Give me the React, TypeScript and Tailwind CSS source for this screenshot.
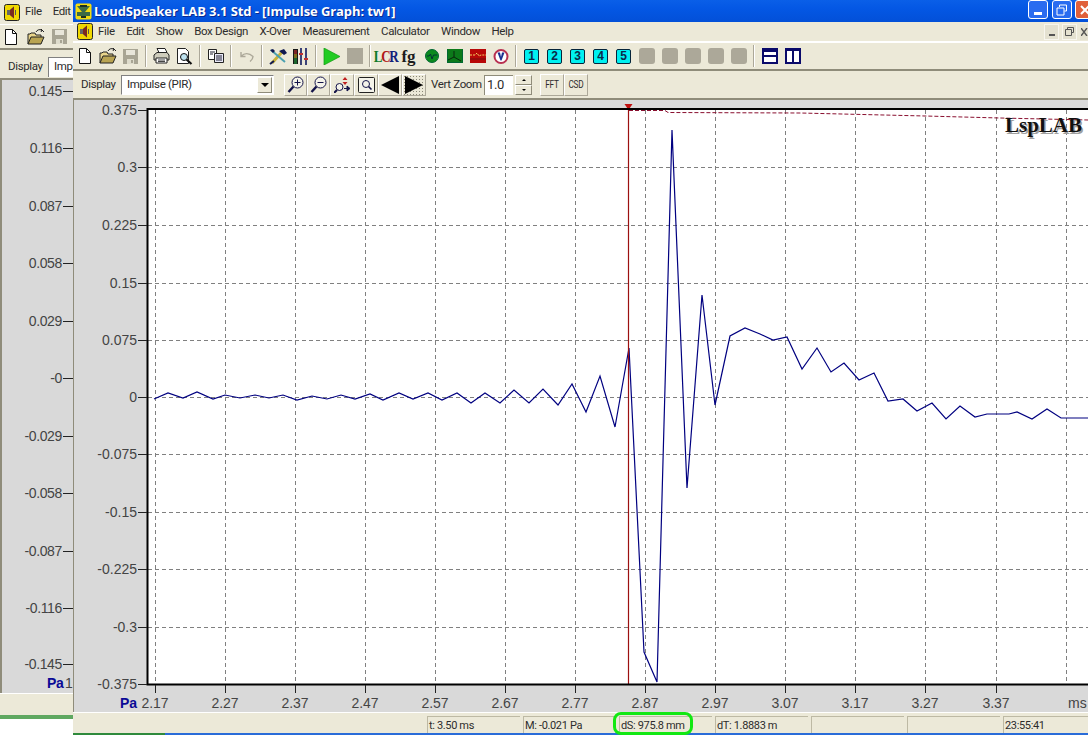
import React from "react";

const curve =
  "154,399 168,393 183,398 197,392 213,399 225,395 240,398 255,395 269,398 283,395 297,400 312,396 327,399 341,395 355,399 370,394 383,400 399,393 413,399 428,393 442,400 457,393 471,403 485,393 500,403 514,390 529,403 543,389 558,405 572,384 586,412 600,376 615,427 629,348 644,652 657,682 672,130 687,488 702,295 715,405 730,336 745,328 760,334 773,340 787,337 802,369 817,348 831,372 844,363 859,380 874,373 888,401 903,399 917,411 932,403 946,419 960,406 975,417 987,414 1009,414 1017,412 1032,419 1047,409 1061,418 1088,418";

const yTicks: [string, number][] = [
  ["0.375", 110], ["0.3", 167], ["0.225", 225], ["0.15", 283], ["0.075", 340], ["0", 397],
  ["-0.075", 454], ["-0.15", 512], ["-0.225", 569], ["-0.3", 627], ["-0.375", 684],
];
const xTicks: [string, number][] = [
  ["2.17", 155], ["2.27", 225], ["2.37", 295], ["2.47", 365], ["2.57", 435], ["2.67", 505], ["2.77", 575],
  ["2.87", 645], ["2.97", 715], ["3.07", 785], ["3.17", 855], ["3.27", 925], ["3.37", 996],
];
const leftTicks: [string, number][] = [
  ["0.145", 91], ["0.116", 148], ["0.087", 206], ["0.058", 263], ["0.029", 321], ["-0", 378],
  ["-0.029", 436], ["-0.058", 493], ["-0.087", 551], ["-0.116", 608], ["-0.145", 664],
];

function SpeakerLogo() {
  return (
    <svg width="16" height="17" viewBox="0 0 16 17">
      <rect x="0.5" y="0.5" width="15" height="16" rx="2" fill="#f0d800" stroke="#222" />
      <path d="M3 6h3l4-3.500v12L6 11H3z" fill="#666" />
      <path d="M6 6l4-3.500v12L6 11z" fill="#7a2a20" />
      <path d="M11.500 6v5" stroke="#555" />
    </svg>
  );
}
function TitleLogo() {
  return (
    <svg width="17" height="17" viewBox="0 0 17 17">
      <rect x="0.5" y="0.5" width="16" height="16" rx="2" fill="#f2dc10" />
      <path d="M2 3h13L10 9h5v4H2v-4h5z" fill="#3d6b45" />
      <path d="M5 2h7v2H5zM6 13h5v2H6z" fill="#1d3020" />
    </svg>
  );
}
function NewIc() {
  return (
    <svg width="14" height="16" viewBox="0 0 14 16">
      <path d="M1.5 .5h7l4 4v11h-11z" fill="#fff" stroke="#111" />
      <path d="M8.5 .5v4h4" fill="none" stroke="#111" />
    </svg>
  );
}
function OpenIc() {
  return (
    <svg width="18" height="16" viewBox="0 0 18 16">
      <path d="M1 15V5h2l1-1h4l1 2h5v2" fill="#e8d48a" stroke="#222" />
      <path d="M1 15l3-7h13l-3 7z" fill="#b9a452" stroke="#222" />
      <path d="M9 3c1-2 3-3 6-2m0 0l-1-1m1 1l-1 2M15 1l2 2" fill="none" stroke="#222" />
    </svg>
  );
}
function SaveIc({ c = "#a8a594" }: { c?: string }) {
  return (
    <svg width="15" height="15" viewBox="0 0 15 15">
      <path d="M0 0h15v15H0z" fill={c} />
      <path d="M3 1h9v5H3z" fill="#e8e6da" />
      <path d="M4 10h7v5H4z" fill="#dedccc" />
      <path d="M8 11h2v3H8z" fill={c} />
    </svg>
  );
}
function PrintIc() {
  return (
    <svg width="17" height="16" viewBox="0 0 17 16">
      <path d="M4 .5h8l2 4H6z" fill="#fff" stroke="#222" />
      <path d="M1 7l3-2.500h10l2 2.500v5H1z" fill="#cfcdbd" stroke="#222" />
      <path d="M3 10h11v5H3z" fill="#fff" stroke="#222" />
      <path d="M5 12h7M5 13.500h7" stroke="#444" />
    </svg>
  );
}
function PreviewIc() {
  return (
    <svg width="17" height="17" viewBox="0 0 17 17">
      <path d="M1.500 .5h8l3 3v12h-11z" fill="#fff" stroke="#222" />
      <circle cx="8" cy="9" r="3.500" fill="#bfe3f0" stroke="#111" />
      <path d="M10.500 11.500L15.500 16" stroke="#111" strokeWidth="2.200" />
    </svg>
  );
}
function CopyIc() {
  return (
    <svg width="16" height="14" viewBox="0 0 16 14">
      <path d="M.5.5h8v10h-8z" fill="#fff" stroke="#222" />
      <path d="M6.500 4.500h9v9h-9z" fill="#e8e8f8" stroke="#222" />
      <path d="M2 3h5M2 5h3M8 7h6M8 9h6M8 11h6" stroke="#223" />
    </svg>
  );
}
function UndoIc() {
  return (
    <svg width="14" height="11" viewBox="0 0 14 11">
      <path d="M1 1v4.500h4.500M1.500 5C4 2 9 1.500 13 5.500c0 2 -1 3.500 -3 5" fill="none" stroke="#aca899" strokeWidth="1.400" />
    </svg>
  );
}
function ToolsIc() {
  return (
    <svg width="18" height="17" viewBox="0 0 18 17">
      <path d="M3 15L14 3" stroke="#c8b23a" strokeWidth="3" />
      <path d="M2 2l14 12" stroke="#4aa0b0" strokeWidth="2" />
      <path d="M10 3l5-2 3 4-3 2z" fill="#101850" />
      <path d="M1 2l3-1 2 2-2 2z" fill="#101850" />
      <path d="M1 16l4-3" stroke="#101850" strokeWidth="2" />
    </svg>
  );
}
function SlidersIc() {
  return (
    <svg width="16" height="17" viewBox="0 0 16 17">
      <path d="M0 1h5v15H0z" fill="#181818" />
      <path d="M1 3h3M1 5h3" stroke="#e03030" />
      <path d="M1 7h3M1 9h3" stroke="#e0c020" />
      <path d="M1 11h3M1 13h3M1 15h3" stroke="#20b040" />
      <path d="M8 0v17M13 0v17" stroke="#111a60" strokeWidth="1.600" />
      <path d="M6 5h4v2H6zM11 10h4v2h-4z" fill="#c03030" />
    </svg>
  );
}
function PlayIc() {
  return (
    <svg width="17" height="17" viewBox="0 0 17 17">
      <path d="M1 0l16 8.500L1 17z" fill="#22cc22" stroke="#119911" strokeWidth="0.700" />
    </svg>
  );
}
function StopIc() {
  return <span className="block h-[16px] w-[16px] bg-[#aca899]" />;
}
function CircleGreen() {
  return (
    <svg width="14" height="14" viewBox="0 0 14 14">
      <circle cx="7" cy="7" r="6.500" fill="#0a8a1e" stroke="#063" />
      <path d="M2 7h2l1.500-2 1.500 5 1.500-4H12" fill="none" stroke="#033" />
    </svg>
  );
}
function GreenGraph() {
  return (
    <svg width="16" height="14" viewBox="0 0 16 14">
      <path d="M0 0h16v14H0z" fill="#0c7a1a" />
      <path d="M.5.5v13h15V.5" fill="none" stroke="#063" />
      <path d="M1 11l6-3V2m0 6l7 4" fill="none" stroke="#08280c" />
    </svg>
  );
}
function RedGraph() {
  return (
    <svg width="16" height="14" viewBox="0 0 16 14">
      <path d="M0 0h16v14H0z" fill="#b80808" />
      <path d="M0 6h5l2-2 2 3 2-1 5 0" fill="none" stroke="#f4d060" strokeDasharray="2 1" />
      <path d="M0 10h16" stroke="#701010" />
    </svg>
  );
}
function VIc() {
  return (
    <svg width="16" height="15" viewBox="0 0 16 15">
      <circle cx="8" cy="7.500" r="6.500" fill="#fff" stroke="#b83050" strokeWidth="2" />
      <path d="M4.500 3.500h2.500l1 4.500 1-4.500h2.500l-3 8H7.500z" fill="#1a3090" />
    </svg>
  );
}
function ZoomIc({ kind }: { kind: "+" | "-" }) {
  return (
    <svg width="17" height="18" viewBox="0 0 17 18">
      <circle cx="10.500" cy="6.500" r="5.500" fill="#f4f3ea" stroke="#14144a" />
      <path d={kind === "+" ? "M7.500 6.500h6M10.500 3.500v6" : "M7.500 6.500h6"} stroke="#14144a" />
      <path d="M6.500 10.500L1.500 16" stroke="#14144a" strokeWidth="2.400" />
    </svg>
  );
}
function ZoomMove() {
  return (
    <svg width="17" height="16" viewBox="0 0 17 16">
      <circle cx="5.500" cy="10" r="3.500" fill="#f4f3ea" stroke="#14144a" />
      <path d="M3 13L0 16" stroke="#14144a" strokeWidth="2" />
      <path d="M11 0l2.500 3h-5zM11 8l2.500-3h-5z" fill="#c02020" />
      <path d="M13 9l3 2.500-3 2.500zM10 11.500h4" fill="#14144a" stroke="#14144a" />
    </svg>
  );
}
function ZoomBox() {
  return (
    <svg width="17" height="16" viewBox="0 0 17 16">
      <rect x="0.500" y="0.500" width="16" height="15" rx="1" fill="#f4f3ea" stroke="#222" />
      <circle cx="8" cy="7" r="3.500" fill="none" stroke="#14144a" />
      <path d="M10.500 9.500l3 3" stroke="#14144a" strokeWidth="1.600" />
    </svg>
  );
}
function LayoutA() {
  return (
    <svg width="16" height="16" viewBox="0 0 16 16">
      <rect x="1" y="1" width="14" height="14" fill="#fff" stroke="#0a0a6a" strokeWidth="2" />
      <path d="M0 0h16v4H0zM0 7h16v2H0z" fill="#0a0a6a" />
    </svg>
  );
}
function LayoutB() {
  return (
    <svg width="16" height="16" viewBox="0 0 16 16">
      <rect x="1" y="1" width="14" height="14" fill="#fff" stroke="#0a0a6a" strokeWidth="2" />
      <path d="M0 0h16v3H0zM7 0h2v16H7z" fill="#0a0a6a" />
    </svg>
  );
}

const Slot = ({ children }: { children: React.ReactNode }) => (
  <div className="flex w-[23px] shrink-0 items-center justify-center">{children}</div>
);
const Sep = () => (
  <div className="flex w-[8px] shrink-0 justify-center">
    <div className="h-[22px] w-[2px] border-l border-r border-l-[#aca899] border-r-white" />
  </div>
);
const Num = ({ n }: { n: number }) => (
  <span className="flex h-[15px] w-[15px] items-center justify-center rounded-[2px] border border-[#06243a] bg-[#00f0f0] font-['Liberation_Sans',sans-serif] text-[12px] font-bold leading-none text-[#0a2a4a]">
    {n}
  </span>
);
const Blank = () => <span className="block h-[16px] w-[16px] rounded-[3px] bg-[#aca899]" />;

const Raised = ({ w, children, dotted }: { w: string; children?: React.ReactNode; dotted?: boolean }) => (
  <div
    className={`flex h-[22px] shrink-0 items-center justify-center border border-b-[#aca899] border-l-white border-r-[#aca899] border-t-white ${w} ${
      dotted ? "bg-[radial-gradient(#8a8878_0.6px,transparent_0.7px)] bg-[length:3px_3px]" : ""
    }`}
  >
    {children}
  </div>
);

const uiFont = "font-['Roboto','Liberation_Sans',sans-serif] text-[11.5px] tracking-[-0.35px] leading-none text-[#2c2c2c]";

const Panel = ({ children }: { children?: React.ReactNode }) => (
  <div className="flex h-[17px] w-[93px] shrink-0 items-center overflow-hidden whitespace-nowrap border-l border-t border-l-[#bdb9a4] border-t-[#bdb9a4] pl-[1px] text-[11px]">
    {children}
  </div>
);

function WinBtn({ bg, children }: { bg: string; children: React.ReactNode }) {
  return (
    <div className={`flex h-[19px] w-[20px] shrink-0 items-center justify-center rounded-[3px] border border-white ${bg}`}>
      {children}
    </div>
  );
}

function BackWindow() {
  return (
    <div className={`flex h-full w-[73px] shrink-0 flex-col overflow-hidden bg-[#ece9d8] ${uiFont}`}>
      <div className="flex h-[25px] shrink-0 items-center border-b border-b-white pl-[4px]">
        <SpeakerLogo />
        <span className="ml-[5px]">File</span>
        <span className="ml-[11px] whitespace-nowrap">Edit</span>
      </div>
      <div className="flex h-[25px] shrink-0 items-center border-b-2 border-b-[#8f8c7a]">
        <div className="ml-[4px]"><NewIc /></div>
        <div className="ml-[9px]"><OpenIc /></div>
        <div className="ml-[7px]"><SaveIc /></div>
      </div>
      <div className="flex h-[30px] shrink-0 items-center border-b-2 border-b-[#8f8c7a] pl-[8px] pt-[5px]">
        <span className="w-[40px] shrink-0">Display</span>
        <div className="flex h-[20px] flex-1 items-center overflow-hidden whitespace-nowrap border-l border-t border-l-[#808080] border-t-[#808080] bg-white pl-[5px]">
          Imp
        </div>
      </div>
      <div className="min-h-0 flex-1 border-l-2 border-l-[#8f8c7a] bg-[#d9d9d9]">
        <svg width="71" height="613" viewBox="2 80 71 613" className="block">
          {leftTicks.map(([t, y]) => (
            <g key={t}>
              <text x="62" y={y + 5} textAnchor="end" fontFamily="'Liberation Sans',sans-serif" fontSize="14" fill="#444">
                {t}
              </text>
              <path d={`M63 ${y + 0.5}H73`} stroke="#222" />
            </g>
          ))}
          <text x="47" y="688" fontFamily="'Liberation Sans',sans-serif" fontSize="14" fontWeight="700" fill="#0a0a96">
            Pa
          </text>
          <text x="65" y="688" fontFamily="'Liberation Sans',sans-serif" fontSize="14" fill="#444">
            1
          </text>
        </svg>
      </div>
      <div className="h-[22px] shrink-0 border-t border-t-white" />
      <div className="h-[4px] shrink-0 bg-[#5fa860]" />
      <div className="h-[16px] shrink-0 bg-white" />
    </div>
  );
}

function Chart() {
  const gridDash = "4 3";
  return (
    <svg width="1014" height="612" viewBox="74 100 1014 612" className="block">
      <rect x="148" y="110" width="940" height="574" fill="#fff" />
      {/* grid */}
      {yTicks.slice(1, -1).map(([t, y]) => (
        <path key={t} d={`M148 ${y + 0.5}H1088`} stroke="#808080" strokeDasharray={gridDash} />
      ))}
      {[...xTicks.map((x) => x[1]), 1066].map((x) => (
        <path key={x} d={`M${x + 0.5} 110V684`} stroke="#808080" strokeDasharray={gridDash} />
      ))}
      {/* curve */}
      <polyline points={curve} fill="none" stroke="#000080" strokeWidth="1.200" />
      {/* cursor */}
      <path d="M628.500 106V684" stroke="#9c1010" strokeWidth="1.200" />
      <path d="M624.500 104h8l-4 6z" fill="#c01010" />
      <path
        d="M629 110.500H665L668 112.500L800 113L925 116L1000 118L1088 120"
        fill="none"
        stroke="#8a1030"
        strokeDasharray="4 2"
      />
      {/* frame */}
      <path d="M1088 109H147.500V684.500H1088" fill="none" stroke="#000" strokeWidth="2" />
      {/* axis ticks and labels */}
      {yTicks.map(([t, y]) => (
        <g key={t}>
          <text x="137" y={y + 5} textAnchor="end" fontFamily="'Liberation Sans',sans-serif" fontSize="14" fill="#444">
            {t}
          </text>
          <path d={`M138 ${y + 0.5}H147`} stroke="#222" />
        </g>
      ))}
      {xTicks.map(([t, x]) => (
        <g key={t}>
          <path d={`M${x + 0.5} 685V693`} stroke="#222" />
          <text x={x} y="708" textAnchor="middle" fontFamily="'Liberation Sans',sans-serif" fontSize="14" fill="#444">
            {t}
          </text>
        </g>
      ))}
      <text x="1068" y="708" fontFamily="'Liberation Sans',sans-serif" fontSize="14" fill="#444">
        ms
      </text>
      <text x="120" y="708" fontFamily="'Liberation Sans',sans-serif" fontSize="14" fontWeight="700" fill="#0a0a96">
        Pa
      </text>
      {/* logo */}
      <text x="1006.500" y="133.500" fontFamily="'Liberation Serif',serif" fontSize="21" fontWeight="700" fill="#a0a0a0">
        LspLAB
      </text>
      <text x="1005" y="132" fontFamily="'Liberation Serif',serif" fontSize="21" fontWeight="700" fill="#111">
        LspLAB
      </text>
    </svg>
  );
}

function FrontWindow() {
  return (
    <div className="relative flex h-full min-w-0 flex-1 flex-col overflow-hidden bg-[#ece9d8]">
      {/* title */}
      <div className="flex h-[22px] shrink-0 items-center bg-[linear-gradient(180deg,#0a5fe8_0%,#0457e4_40%,#0350d8_100%)] pl-[2px]">
        <TitleLogo />
        <span className="ml-[2px] whitespace-nowrap font-['Open_Sans','Liberation_Sans',sans-serif] text-[13px] font-bold leading-none tracking-[-0.09px] text-white [text-shadow:1px_1px_0_#0a2a90]">
          LoudSpeaker LAB 3.1 Std - [Impulse Graph: tw1]
        </span>
        <div className="-mr-[7px] ml-auto flex items-center gap-[3px] self-start">
          <div className="mr-[1px]">
            <WinBtn bg="bg-[#2a6cf0]">
              <span className="mt-[8px] block h-[3px] w-[8px] bg-white" />
            </WinBtn>
          </div>
          <WinBtn bg="bg-[#2a6cf0]">
            <svg width="12" height="12" viewBox="0 0 12 12">
              <path d="M3.500 3V1h7v6H8.500M1 4h7v7H1z" fill="none" stroke="#fff" />
            </svg>
          </WinBtn>
          <WinBtn bg="bg-[#e0603a]">
            <svg width="10" height="10" viewBox="0 0 10 10">
              <path d="M1 1l8 8M9 1l-8 8" stroke="#fff" strokeWidth="2" />
            </svg>
          </WinBtn>
        </div>
      </div>

      {/* menu */}
      <div className={`flex h-[21px] shrink-0 items-center border-b-2 border-b-white pl-[4px] ${uiFont}`}>
        <SpeakerLogo />
        <div className="ml-[5px] flex gap-[11.5px] whitespace-nowrap">
          {["File", "Edit", "Show", "Box Design", "X-Over", "Measurement", "Calculator", "Window", "Help"].map((m) => (
            <span key={m}>{m}</span>
          ))}
        </div>
        <div className="ml-auto flex gap-[3px]">
          <div className="flex h-[16px] w-[15px] items-end justify-center border border-[#f8f6ee] bg-[#e4e1d0] pb-[3px]">
            <span className="h-[2px] w-[6px] bg-[#555]" />
          </div>
          <div className="flex h-[16px] w-[15px] items-center justify-center border border-[#f8f6ee] bg-[#e4e1d0]">
            <svg width="9" height="9" viewBox="0 0 9 9">
              <path d="M2.500 2V.5h6v5H7M.5 2.500h6v6h-6z" fill="none" stroke="#555" />
            </svg>
          </div>
          <div className="flex h-[16px] w-[8px] items-center overflow-hidden bg-[#e4e1d0] pl-[1px]">
            <svg width="7" height="8" viewBox="0 0 7 8">
              <path d="M0 0l6 8M6 0L0 8" stroke="#555" strokeWidth="1.400" />
            </svg>
          </div>
        </div>
      </div>

      {/* toolbar 1 */}
      <div className="flex h-[28px] shrink-0 items-center border-b-2 border-b-[#8f8c7a]">
        <Slot><NewIc /></Slot>
        <Slot><OpenIc /></Slot>
        <Slot><SaveIc /></Slot>
        <Sep />
        <Slot><PrintIc /></Slot>
        <Slot><PreviewIc /></Slot>
        <Sep />
        <Slot><CopyIc /></Slot>
        <Sep />
        <Slot><UndoIc /></Slot>
        <Sep />
        <Slot><ToolsIc /></Slot>
        <Slot><SlidersIc /></Slot>
        <Sep />
        <Slot><PlayIc /></Slot>
        <Slot><StopIc /></Slot>
        <Sep />
        <Slot>
          <span className="scale-y-125 font-['Liberation_Serif',serif] text-[13px] font-bold leading-none tracking-[-1.4px]">
            <span className="text-[#0c7a2a]">L</span>
            <span className="text-[#b01818]">C</span>
            <span className="text-[#12207a]">R</span>
          </span>
        </Slot>
        <Slot>
          <span className="font-['Liberation_Serif',serif] text-[17px] font-bold leading-none text-[#1c1c1c]">fg</span>
        </Slot>
        <Slot><CircleGreen /></Slot>
        <Slot><GreenGraph /></Slot>
        <Slot><RedGraph /></Slot>
        <Slot><VIc /></Slot>
        <Sep />
        {[1, 2, 3, 4, 5].map((n) => (
          <Slot key={n}><Num n={n} /></Slot>
        ))}
        {[0, 1, 2, 3, 4].map((n) => (
          <Slot key={n}><Blank /></Slot>
        ))}
        <Sep />
        <Slot><LayoutA /></Slot>
        <Slot><LayoutB /></Slot>
      </div>

      {/* toolbar 2 */}
      <div className={`flex h-[29px] shrink-0 items-center border-b-2 border-b-[#8f8c7a] ${uiFont}`}>
        <span className="ml-[8px] w-[40px] shrink-0">Display</span>
        <div className="flex h-[20px] w-[153px] shrink-0 items-center justify-between border border-b-white border-l-[#808080] border-r-white border-t-[#808080] bg-white pl-[5px] pr-[1px]">
          <span>Impulse (PIR)</span>
          <span className="flex h-[16px] w-[15px] items-center justify-center border border-b-[#8f8c7a] border-l-white border-r-[#8f8c7a] border-t-white bg-[#ece9d8]">
            <span className="h-0 w-0 border-x-[4px] border-t-[4px] border-x-transparent border-t-black" />
          </span>
        </div>
        <div className="ml-[10px] flex">
          <Raised w="w-[23px]"><ZoomIc kind="+" /></Raised>
          <Raised w="w-[23px]"><ZoomIc kind="-" /></Raised>
          <Raised w="w-[24px]"><ZoomMove /></Raised>
          <Raised w="w-[24px]"><ZoomBox /></Raised>
          <Raised w="w-[24px]">
            <span className="h-0 w-0 border-y-[9px] border-r-[18px] border-y-transparent border-r-black" />
          </Raised>
          <Raised w="w-[24px]" dotted>
            <span className="h-0 w-0 border-y-[9px] border-l-[18px] border-y-transparent border-l-black" />
          </Raised>
        </div>
        <span className="ml-[5px] w-[53px] shrink-0 whitespace-nowrap">Vert Zoom</span>
        <div className="flex h-[20px] w-[29px] shrink-0 items-start border-l border-t border-l-[#8f8c7a] border-t-[#8f8c7a] bg-white pl-[2px] pt-[2px] text-[13px]">
          1.0
        </div>
        <div className="ml-[2px] flex h-[20px] w-[17px] shrink-0 flex-col">
          <div className="flex flex-1 items-center justify-center border border-b-[#8f8c7a] border-l-white border-r-[#8f8c7a] border-t-white">
            <span className="h-0 w-0 border-x-[2px] border-b-[2px] border-x-transparent border-b-black" />
          </div>
          <div className="flex flex-1 items-center justify-center border border-b-[#8f8c7a] border-l-white border-r-[#8f8c7a] border-t-white">
            <span className="h-0 w-0 border-x-[2px] border-t-[2px] border-x-transparent border-t-black" />
          </div>
        </div>
        <div className="ml-[8px] flex text-[11px]">
          <Raised w="w-[24px]"><span className="scale-x-75">FFT</span></Raised>
          <Raised w="w-[24px]"><span className="scale-x-75">CSD</span></Raised>
        </div>
      </div>

      {/* graph */}
      <div className="min-h-0 flex-1 border-l border-l-[#8f8c7a] bg-[#d9d9d9]">
        <Chart />
      </div>

      {/* status */}
      <div className={`flex h-[21px] shrink-0 items-end gap-[3px] border-t border-t-white pl-[354px] ${uiFont}`}>
        <Panel>t: 3.50 ms</Panel>
        <Panel>M: -0.021 Pa</Panel>
        <Panel>dS: 975.8 mm</Panel>
        <Panel>dT: 1.8883 m</Panel>
        <Panel />
        <Panel />
        <Panel>23:55:41</Panel>
      </div>
      <div className="flex h-[2px] shrink-0">
        <div className="w-[92px] bg-[#2f8a3c]" />
        <div className="flex-1 bg-[#2a6cd8]" />
      </div>

      {/* hand-drawn highlight */}
      <div className="absolute bottom-0 left-[540px] h-[23px] w-[80px] rounded-[8px] border-[3px] border-[#12e812]" />
    </div>
  );
}

export default function App() {
  return (
    <div className="flex h-[735px] w-[1088px] overflow-hidden bg-white">
      <BackWindow />
      <FrontWindow />
    </div>
  );
}
